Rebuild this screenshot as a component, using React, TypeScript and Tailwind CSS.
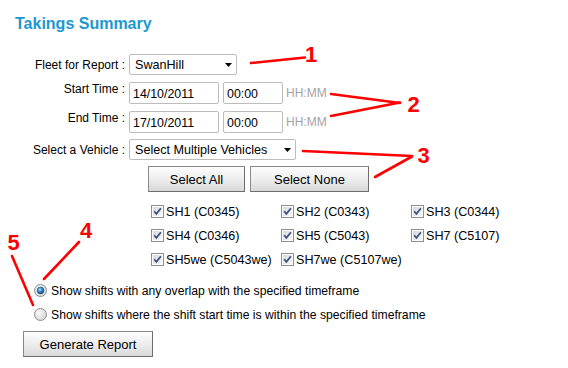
import React from "react";

function Arrow() {
  return (
    <svg width="7" height="4" viewBox="0 0 7 4" className="shrink-0">
      <path d="M0 0 L7 0 L3.5 4 Z" fill="#000" />
    </svg>
  );
}

function SelectBox({ value, w }: { value: string; w: string }) {
  return (
    <div
      className={`ml-[4px] ${w} h-[21px] border border-[#bdbdbd] rounded-[2px] bg-white flex items-center justify-between pl-[5px] pr-[4px] text-[12.6px] leading-[14px]`}
    >
      <span>{value}</span>
      <Arrow />
    </div>
  );
}

function TextInput({ value, w, ml }: { value: string; w: string; ml: string }) {
  return (
    <div
      className={`${ml} ${w} h-[22px] border border-[#bcbcbc] rounded-[2px] bg-white flex items-center pl-[3px] pt-[2px] text-[12.4px] leading-[14px]`}
    >
      {value}
    </div>
  );
}

function Checkbox({ id }: { id: string }) {
  return (
    <svg width="13" height="13" viewBox="0 0 13 13" className="shrink-0">
      <defs>
        <linearGradient id={id} x1="0" y1="0" x2="1" y2="1">
          <stop offset="0" stopColor="#d3d8de" />
          <stop offset="1" stopColor="#f8f8f8" />
        </linearGradient>
      </defs>
      <rect x="0.5" y="0.5" width="12" height="12" fill="#fff" stroke="#8e8f8f" />
      <rect x="2" y="2" width="9" height="9" fill={`url(#${id})`} />
      <path d="M3.2 6.2 L5.4 8.8 L9.9 3.2" stroke="#3f4f82" strokeWidth="1.7" fill="none" />
    </svg>
  );
}

function Radio({ checked, id }: { checked: boolean; id: string }) {
  return (
    <svg width="13" height="13" viewBox="0 0 13 13" className="shrink-0">
      <defs>
        <radialGradient id={`${id}o`} cx="0.35" cy="0.35" r="0.8">
          <stop offset="0" stopColor="#fafafa" />
          <stop offset="1" stopColor="#cfcfcf" />
        </radialGradient>
        <radialGradient id={`${id}i`} cx="0.4" cy="0.35" r="0.7">
          <stop offset="0" stopColor="#a8dcff" />
          <stop offset="0.5" stopColor="#2f86c6" />
          <stop offset="1" stopColor="#123f6a" />
        </radialGradient>
      </defs>
      <circle cx="6.5" cy="6.5" r="6" fill={`url(#${id}o)`} stroke="#8d8d8d" />
      {checked && <circle cx="6.5" cy="6.5" r="3.4" fill={`url(#${id}i)`} stroke="#1d4f7c" strokeWidth="0.6" />}
    </svg>
  );
}

function Button({ label, w }: { label: string; w: string }) {
  return (
    <div
      className={`${w} h-[26px] border border-[#8a8a8a] border-r-[#6e6e6e] border-b-[#6e6e6e] bg-linear-to-b from-[#fcfcfc] via-[#eeeeee] to-[#d8d8d8] flex items-center justify-center text-[13px] leading-[15px]`}
    >
      {label}
    </div>
  );
}

const vehicles = [
  "SH1 (C0345)",
  "SH2 (C0343)",
  "SH3 (C0344)",
  "SH4 (C0346)",
  "SH5 (C5043)",
  "SH7 (C5107)",
  "SH5we (C5043we)",
  "SH7we (C5107we)",
];

export default function App() {
  return (
    <div className="relative w-[568px] h-[368px] overflow-hidden bg-white text-black font-['Liberation_Sans',Arial,sans-serif] text-[12px] leading-[14px]">
      <h1 className="pl-[15px] pt-[15px] text-[16px] leading-[18px] font-bold text-[#1c98d1]">
        Takings Summary
      </h1>

      <div className="mt-[21px] flex flex-col">
        <div className="flex items-center">
          <div className="w-[125px] text-right">Fleet for Report :</div>
          <SelectBox value="SwanHill" w="w-[108px]" />
        </div>

        <div className="mt-[7px] flex items-start">
          <div className="w-[125px] text-right">Start Time :</div>
          <TextInput value="14/10/2011" w="w-[90px]" ml="ml-[4px]" />
          <TextInput value="00:00" w="w-[60px]" ml="ml-[4px]" />
          <div className="ml-[3px] self-center text-[#a3a3a3]">HH:MM</div>
        </div>

        <div className="mt-[7px] flex items-start">
          <div className="w-[125px] text-right">End Time :</div>
          <TextInput value="17/10/2011" w="w-[90px]" ml="ml-[4px]" />
          <TextInput value="00:00" w="w-[60px]" ml="ml-[4px]" />
          <div className="ml-[3px] self-center text-[#a3a3a3]">HH:MM</div>
        </div>

        <div className="mt-[6px] flex items-center">
          <div className="w-[125px] text-right">Select a Vehicle :</div>
          <SelectBox value="Select Multiple Vehicles" w="w-[167px]" />
        </div>

        <div className="mt-[6px] ml-[148px] flex gap-[5px]">
          <Button label="Select All" w="w-[97px]" />
          <Button label="Select None" w="w-[119px]" />
        </div>

        <div className="mt-[13px] ml-[151px] grid grid-cols-[130px_130px_130px] gap-y-[11px]">
          {vehicles.map((v, i) => (
            <div key={v} className="flex items-center h-[13px] gap-[2px]">
              <Checkbox id={`cb${i}`} />
              <span className="text-[12.6px] leading-[14px] whitespace-nowrap">{v}</span>
            </div>
          ))}
        </div>

        <div className="mt-[18px] ml-[34px] flex items-center h-[13px] gap-[4px]">
          <Radio checked id="r1" />
          <span className="text-[12.2px] whitespace-nowrap">Show shifts with any overlap with the specified timeframe</span>
        </div>
        <div className="mt-[11px] ml-[34px] flex items-center h-[13px] gap-[4px]">
          <Radio checked={false} id="r2" />
          <span className="text-[12.2px] whitespace-nowrap">
            Show shifts where the shift start time is within the specified timeframe
          </span>
        </div>

        <div className="mt-[10px] ml-[23px]">
          <Button label="Generate Report" w="w-[130px]" />
        </div>
      </div>

      <svg
        className="absolute left-0 top-0 pointer-events-none"
        width="568"
        height="368"
        viewBox="0 0 568 368"
      >
        <g stroke="#ff0000" strokeWidth="2.6" strokeLinecap="round" fill="none">
          <line x1="251" y1="63" x2="305" y2="57.5" />
          <line x1="331" y1="94" x2="400" y2="103" />
          <line x1="331" y1="116" x2="400" y2="102.5" />
          <line x1="303" y1="151" x2="412" y2="156" />
          <line x1="375" y1="177" x2="412" y2="156.5" />
          <line x1="79" y1="242" x2="44" y2="279" />
          <line x1="12" y1="256" x2="33" y2="305" />
        </g>
        <g fill="#ff0000" fontFamily="'Liberation Sans', Arial, sans-serif" fontWeight="700" fontSize="22" textAnchor="middle">
          <text x="311" y="62">1</text>
          <text x="413.5" y="112">2</text>
          <text x="423.5" y="163">3</text>
          <text x="86" y="238">4</text>
          <text x="13.5" y="250">5</text>
        </g>
      </svg>
    </div>
  );
}
